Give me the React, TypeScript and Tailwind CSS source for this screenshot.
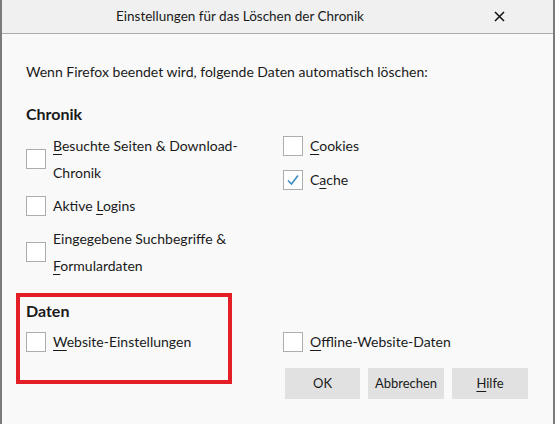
import { useState, type ReactNode } from "react";

function Box({ checked }: { checked?: boolean }) {
  return (
    <span className="flex h-[20px] w-[20px] shrink-0 items-center justify-center border border-[#adadad] bg-white">
      {checked && (
        <svg width="14" height="14" viewBox="0 0 14 14">
          <path d="M2 7.5 L5.5 11 L12 2.5" fill="none" stroke="#3c8dc4" strokeWidth="1.6" />
        </svg>
      )}
    </span>
  );
}

function Check({ checked, children }: { checked?: boolean; children: ReactNode }) {
  const [on, setOn] = useState(!!checked);
  return (
    <label className="flex cursor-default items-center gap-[7px]" onClick={() => setOn(!on)}>
      <Box checked={on} />
      <span className="leading-[27px]">{children}</span>
    </label>
  );
}

const K = ({ c }: { c: string }) => <u className="underline-offset-[3px]">{c}</u>;

export default function App() {
  return (
    <div
      className="relative h-[424px] w-[555px] overflow-hidden border-x-2 border-[#7b7b7b] bg-[#f9f9f9] text-[14px] text-[#1a1a1a]"
      style={{ fontFamily: 'Lato, "Noto Sans", sans-serif' }}
    >
      <div className="flex h-[34px] items-center border-b border-[#acacac] bg-[#f0f0f0]">
        <div className="flex-1 pl-[114px] text-[13.5px]">Einstellungen für das Löschen der Chronik</div>
        <svg className="mr-[48px]" width="11" height="11" viewBox="0 0 11 11">
          <path d="M1 1 L10 10 M10 1 L1 10" stroke="#111" strokeWidth="1.5" />
        </svg>
      </div>

      <div className="pl-[24px]">
        <p className="mt-[28px] leading-[20px]">Wenn Firefox beendet wird, folgende Daten automatisch löschen:</p>

        <h2 className="mt-[20px] text-[16px] font-bold leading-[24px]">Chronik</h2>
        <div className="mt-[6px] grid grid-cols-[257px_1fr]">
          <div className="flex flex-col gap-[6px]">
            <Check>
              <K c="B" />esuchte Seiten &amp; Download-
              <br />
              Chronik
            </Check>
            <Check>
              Aktive <K c="L" />ogins
            </Check>
            <Check>
              Eingegebene Suchbegriffe &amp;
              <br />
              <K c="F" />ormulardaten
            </Check>
          </div>
          <div className="flex flex-col gap-[7px]">
            <Check>
              <K c="C" />ookies
            </Check>
            <Check checked>
              C<K c="a" />che
            </Check>
          </div>
        </div>

        <h2 className="mt-[20px] text-[16px] font-bold leading-[24px]">Daten</h2>
        <div className="mt-[5px] grid grid-cols-[257px_1fr]">
          <Check>
            <K c="W" />ebsite-Einstellungen
          </Check>
          <Check>
            <K c="O" />ffline-Website-Daten
          </Check>
        </div>
      </div>

      <div className="mt-[13px] flex justify-end gap-[8px] pr-[25px] text-[13px]">
        <button className="h-[31px] w-[75px] bg-[#e1e1e1]">OK</button>
        <button className="h-[31px] w-[76px] bg-[#e1e1e1]">Abbrechen</button>
        <button className="h-[31px] w-[76px] bg-[#e1e1e1]">
          <K c="H" />ilfe
        </button>
      </div>

      <div className="pointer-events-none absolute left-[14px] top-[293px] h-[91px] w-[216px] border-[4px] border-[#e41e26]" />
    </div>
  );
}
